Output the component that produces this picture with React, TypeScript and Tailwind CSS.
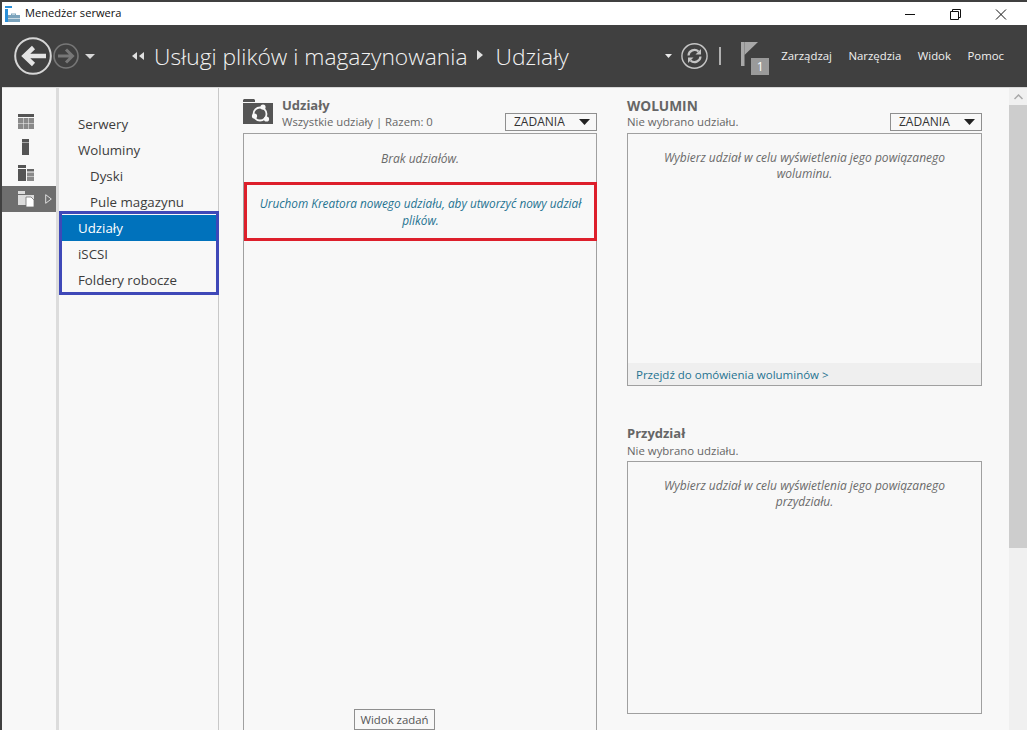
import React from "react";

const F = { fontFamily: '"Open Sans","Noto Sans","Liberation Sans",sans-serif' };

function Back() {
  return (
    <svg width="38" height="38" viewBox="0 0 38 38" className="shrink-0">
      <circle cx="19" cy="19" r="17.8" fill="none" stroke="#d6d6d6" strokeWidth="2" />
      <path d="M32 19H12M19.500 10.500 10.500 19l9 8.500" fill="none" stroke="#e4e4e4" strokeWidth="4.500" />
    </svg>
  );
}
function Forward() {
  return (
    <svg width="26" height="26" viewBox="0 0 26 26" className="shrink-0">
      <circle cx="13" cy="13" r="12" fill="none" stroke="#777" strokeWidth="1.600" />
      <path d="M5 13h14M13 6.500 19.500 13 13 19.500" fill="none" stroke="#777" strokeWidth="3" />
    </svg>
  );
}
function Tri({ w = 10, h = 5, c = "#d8d8d8" }: { w?: number; h?: number; c?: string }) {
  return (
    <svg width={w} height={h} viewBox="0 0 10 5" preserveAspectRatio="none" className="shrink-0">
      <path d="M0 0h10L5 5z" fill={c} />
    </svg>
  );
}
function Refresh() {
  return (
    <svg width="27" height="26" viewBox="0 0 27 26" className="shrink-0">
      <ellipse cx="13.500" cy="13" rx="12.600" ry="12.200" fill="none" stroke="#c4c4c4" strokeWidth="1.400" />
      <path d="M7.500 12.500a6 6 0 0 1 10-4" fill="none" stroke="#c4c4c4" strokeWidth="2.200" />
      <path d="M20 6v5.500h-5.500z" fill="#c4c4c4" />
      <path d="M19.500 13.500a6 6 0 0 1-10 4" fill="none" stroke="#c4c4c4" strokeWidth="2.200" />
      <path d="M7 20v-5.500h5.500z" fill="#c4c4c4" />
    </svg>
  );
}
function Flag() {
  return (
    <div className="relative w-[28px] h-[33px] shrink-0">
      <svg width="18" height="24" viewBox="0 0 18 24" className="absolute left-0 top-0">
        <path d="M0 0h3.500v24H0z" fill="#a8a8a8" />
        <path d="M3.500 0H17L3.500 13z" fill="#a8a8a8" />
      </svg>
      <div className="absolute left-[10px] top-[16px] w-[18px] h-[17px] bg-[#9a9a9a] text-white text-[12px] leading-[18px] text-center">1</div>
    </div>
  );
}
function AppIcon() {
  return (
    <svg width="15" height="16" viewBox="0 0 15 16" className="shrink-0">
      <path d="M0 0h7v2H0zM0 3h3v13H0z" fill="#2a8fd8" />
      <path d="M3 9h3V7.500h5V9h4v7H3z" fill="#7ba3bc" />
      <path d="M3 12h12v.6H3z" fill="#fff" />
      <path d="M7 8.500h3v.5H7z" fill="#fff" />
    </svg>
  );
}
function IconDash() {
  return (
    <svg width="16" height="15" viewBox="0 0 16 15">
      <path d="M0 0h16v3H0z" fill="#555" />
      <path d="M0 4h5.500v5H0zM6 4h4.500v5H6zM11 4h5v5h-5zM0 9.500h5.500V15H0zM6 9.500h4.500V15H6zM11 9.500h5V15h-5z" fill="#8a8a8a" />
    </svg>
  );
}
function IconServer() {
  return (
    <svg width="7" height="16" viewBox="0 0 7 16">
      <path d="M0 0h7v3H0z" fill="#555" />
      <path d="M0 3.500h7V16H0z" fill="#555" />
    </svg>
  );
}
function IconAll() {
  return (
    <svg width="16" height="16" viewBox="0 0 16 16">
      <path d="M0 0h8v3H0zM0 4h8v12H0z" fill="#555" />
      <path d="M9 4h7v2.500H9z" fill="#666" />
      <path d="M9 7.500h7V11H9zM9 11.500h7V16H9z" fill="#8a8a8a" />
    </svg>
  );
}
function IconFiles() {
  return (
    <svg width="16" height="16" viewBox="0 0 16 16">
      <path d="M0 0h7v3H0z" fill="#dcdcdc" />
      <path d="M0 4h16v10H0z" fill="#dcdcdc" />
      <path d="M8 6h5l3 3v7H8z" fill="#fff" stroke="#6e6e6e" strokeWidth="0.800" />
    </svg>
  );
}
function ShareIcon() {
  return (
    <svg width="30" height="25" viewBox="0 0 30 25" className="shrink-0">
      <path d="M0 1l1-1h10l1 1v2H0z" fill="#555" />
      <path d="M0 4h30v21H0z" fill="#555" />
      <circle cx="17" cy="15" r="6.500" fill="none" stroke="#f8f8f8" strokeWidth="1.800" />
      <circle cx="20" cy="8" r="2.600" fill="#f8f8f8" />
      <circle cx="11.500" cy="17" r="2.600" fill="#f8f8f8" />
      <circle cx="23.500" cy="20" r="2.600" fill="#f8f8f8" />
    </svg>
  );
}
function Zadania() {
  return (
    <div className="w-[92px] h-[18px] shrink-0 border border-[#8f8f8f] flex items-center justify-between pl-[8px] pr-[6px] text-[12px] text-[#333]">
      <span>ZADANIA</span>
      <Tri w={11} h={6} c="#222" />
    </div>
  );
}
function NavItem({ label, sub, active }: { label: string; sub?: boolean; active?: boolean }) {
  return (
    <div className={"h-[26px] pt-[2px] flex items-center text-[13.300px] " + (sub ? "pl-[31px] " : "pl-[19px] ") + (active ? "bg-[#0072bc] text-white" : "text-[#3c3c3c]")}>
      {label}
    </div>
  );
}
const greyNote = "text-[12px] leading-[16px] italic text-[#6a6a6a] text-center";

export default function App() {
  return (
    <div style={F} className="w-[1027px] h-[730px] overflow-hidden flex flex-col bg-[#404040] pl-[2px] pt-[2px]">
      <div className="h-[23px] shrink-0 bg-white flex items-center pl-[3px] text-[11.100px] text-[#111]">
        <AppIcon />
        <span className="ml-[5px] flex-1">Menedżer serwera</span>
        <svg width="107" height="14" viewBox="0 0 107 14" className="shrink-0 mr-[15px]">
          <path d="M0 7.500h10" stroke="#111" strokeWidth="1" />
          <path d="M45.500 4.500h8v8h-8zM47.500 4.500v-2h8v8h-2" fill="none" stroke="#111" strokeWidth="1" />
          <path d="M91 2.500l10 10M101 2.500l-10 10" stroke="#111" strokeWidth="1" />
        </svg>
      </div>
      <div className="h-[62px] shrink-0 flex items-center text-white">
        <div className="ml-[12px] flex items-center">
          <Back />
          <div className="ml-[1px]"><Forward /></div>
          <div className="ml-[6px]"><Tri /></div>
        </div>
        <svg width="14" height="8" viewBox="0 0 14 8" className="ml-[37px] shrink-0"><path d="M5 0v8L0 4zM12 0v8L7 4z" fill="#e0e0e0" /></svg>
        <span className="ml-[8px] mt-[3px] text-[22.800px] font-light text-[#f2f2f2] whitespace-nowrap">Usługi plików i magazynowania</span>
        <svg width="6" height="10" viewBox="0 0 6 10" className="ml-[10px] shrink-0 -mt-[2px]"><path d="M0 0l6 5-6 5z" fill="#e0e0e0" /></svg>
        <span className="ml-[12px] mt-[3px] text-[22.800px] font-light text-[#f2f2f2]">Udziały</span>
        <div className="flex-1" />
        <Tri w={7} h={4} c="#e8e8e8" />
        <div className="ml-[9px]"><Refresh /></div>
        <div className="ml-[11px] w-[2px] h-[18px] bg-[#b0b0b0]" />
        <div className="ml-[20px] mt-[5px]"><Flag /></div>
        <nav className="ml-[12px] mr-[23px] flex gap-[16.500px] text-[11.400px] text-[#f0f0f0]">
          <span>Zarządzaj</span>
          <span>Narzędzia</span>
          <span>Widok</span>
          <span>Pomoc</span>
        </nav>
      </div>
      <div className="flex-1 min-h-0 flex bg-[#f8f8f8] border-t border-[#d8d8d8]">
        <aside className="w-[54px] shrink-0 pt-[20px] flex flex-col">
          <div className="h-[26px] pl-[16px] flex items-center"><IconDash /></div>
          <div className="h-[26px] pl-[20px] flex items-center"><IconServer /></div>
          <div className="h-[26px] pl-[16px] flex items-center"><IconAll /></div>
          <div className="h-[26px] pl-[16px] flex items-center bg-[#6e6e6e]">
            <IconFiles />
            <svg width="7" height="10" viewBox="0 0 7 10" className="ml-[11px]"><path d="M.700.700 6.300 5 .700 9.300z" fill="none" stroke="#ddd" strokeWidth="1" /></svg>
          </div>
        </aside>
        <div className="w-[3px] shrink-0 bg-[#dcdcdc]" />
        <div className="relative w-[160px] shrink-0 border-r border-[#c8c8c8] pt-[23px]">
          <NavItem label="Serwery" />
          <NavItem label="Woluminy" />
          <NavItem label="Dyski" sub />
          <NavItem label="Pule magazynu" sub />
          <NavItem label="Udziały" active />
          <NavItem label="iSCSI" />
          <NavItem label="Foldery robocze" />
          <div className="absolute left-0 top-[123px] w-[160px] h-[84px] border-[3px] border-[#3f48b8] pointer-events-none" />
        </div>
        <main className="flex-1 min-w-0 flex pl-[24px] pt-[9px]">
          <section className="w-[354px] shrink-0 flex flex-col min-h-0">
            <div className="h-[36px] shrink-0 flex">
              <div className="pt-[2px]"><ShareIcon /></div>
              <div className="ml-[9px] flex-1 min-w-0">
                <div className="text-[13px] leading-[17px] font-bold text-[#666]">Udziały</div>
                <div className="text-[11.300px] leading-[16px] text-[#666]">Wszystkie udziały | Razem: 0</div>
              </div>
              <div className="self-end mb-[2px]"><Zadania /></div>
            </div>
            <div className="flex-1 min-h-0 border border-[#a0a0a0] border-b-0 relative flex flex-col">
              <p className={greyNote + " pt-[17px] h-[48px] shrink-0"}>Brak udziałów.</p>
              <div className="h-[59px] pt-[1px] shrink-0 -mr-[1px] border-[3px] border-[#dd1f2b] flex items-center justify-center text-center text-[11.800px] leading-[17px] italic text-[#1f7391] px-[8px]">
                Uruchom Kreatora nowego udziału, aby utworzyć nowy udział plików.
              </div>
              <div className="absolute left-[110px] bottom-0 w-[81px] h-[21px] bg-[#f8f8f8] border border-[#8f8f8f] flex items-center justify-center text-[11.400px] text-[#555]">Widok zadań</div>
            </div>
          </section>
          <section className="ml-[30px] w-[355px] shrink-0 flex flex-col">
            <div className="h-[36px] shrink-0 flex">
              <div className="flex-1 min-w-0">
                <div className="text-[13.700px] leading-[17px] font-bold text-[#666]">WOLUMIN</div>
                <div className="text-[11.400px] leading-[16px] text-[#666]">Nie wybrano udziału.</div>
              </div>
              <div className="self-end mb-[2px]"><Zadania /></div>
            </div>
            <div className="h-[253px] shrink-0 border border-[#a0a0a0] flex flex-col">
              <p className={greyNote + " flex-1 pt-[16px] px-[30px]"}>Wybierz udział w celu wyświetlenia jego powiązanego woluminu.</p>
              <div className="h-[22px] bg-[#efefef] pl-[8px] pt-[2px] flex items-center text-[11.500px] text-[#1f7391]">Przejdź do omówienia woluminów &gt;</div>
            </div>
            <div className="mt-[39px] h-[36px] shrink-0">
              <div className="text-[13px] leading-[17px] font-bold text-[#666]">Przydział</div>
              <div className="mt-[1px] text-[11.400px] leading-[16px] text-[#666]">Nie wybrano udziału.</div>
            </div>
            <div className="h-[253px] shrink-0 border border-[#a0a0a0]">
              <p className={greyNote + " pt-[16px] px-[30px]"}>Wybierz udział w celu wyświetlenia jego powiązanego przydziału.</p>
            </div>
          </section>
          <div className="flex-1" />
        </main>
        <div className="w-[18px] shrink-0 flex flex-col bg-[#f0f0f0]">
          <div className="h-[17px] flex items-center justify-center">
            <svg width="9" height="6" viewBox="0 0 9 6"><path d="M.500 5 4.500 1l4 4" fill="none" stroke="#a8a8a8" strokeWidth="1.500" /></svg>
          </div>
          <div className="h-[443px] bg-[#cdcdcd]" />
        </div>
      </div>
    </div>
  );
}
